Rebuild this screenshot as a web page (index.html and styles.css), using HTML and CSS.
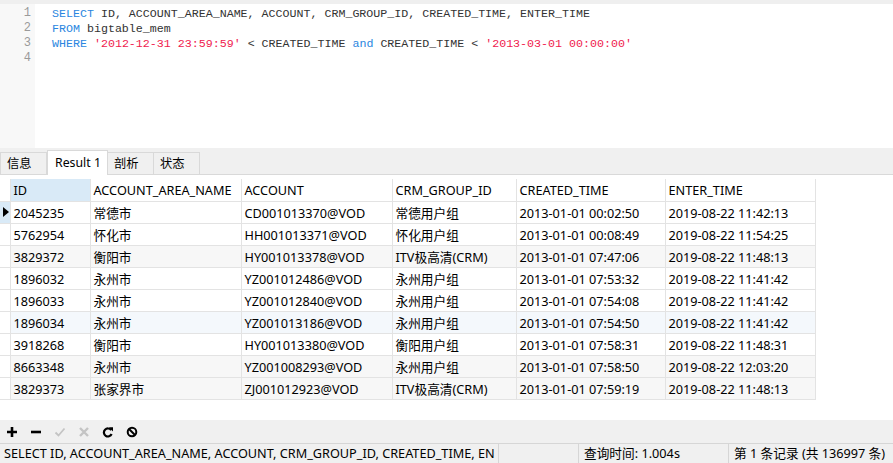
FILE: index.html
```html
<!DOCTYPE html>
<html>
<head>
<meta charset="utf-8">
<link rel="stylesheet" href="styles.css">
</head>
<body>
<div class="app">
  <div class="topstrip"></div>
  <div class="editor">
    <div class="gutter">
      <div class="ln">1</div><div class="ln">2</div><div class="ln">3</div><div class="ln">4</div>
    </div>
    <div class="code">
      <div class="line"><span class="kw">SELECT</span> ID, ACCOUNT_AREA_NAME, ACCOUNT, CRM_GROUP_ID, CREATED_TIME, ENTER_TIME</div>
      <div class="line"><span class="kw">FROM</span> bigtable_mem</div>
      <div class="line"><span class="kw">WHERE</span> <span class="str">'2012-12-31 23:59:59'</span> &lt; CREATED_TIME <span class="kw">and</span> CREATED_TIME &lt; <span class="str">'2013-03-01 00:00:00'</span></div>
      <div class="line"></div>
    </div>
  </div>
  <div class="tabbar">
    <div class="tab">信息</div>
    <div class="tab active">Result 1</div>
    <div class="tab">剖析</div>
    <div class="tab">状态</div>
  </div>
  <div class="gridwrap">
    <table class="grid">
      <colgroup>
        <col class="c0"><col class="c1"><col class="c2"><col class="c3"><col class="c4"><col class="c5"><col class="c6">
      </colgroup>
      <thead>
        <tr><th class="ind"></th><th class="sel">ID</th><th>ACCOUNT_AREA_NAME</th><th>ACCOUNT</th><th>CRM_GROUP_ID</th><th>CREATED_TIME</th><th>ENTER_TIME</th></tr>
      </thead>
      <tbody>
        <tr class="cur"><td class="ind"><span class="tri"></span></td><td>2045235</td><td>常德市</td><td>CD001013370@VOD</td><td>常德用户组</td><td>2013-01-01 00:02:50</td><td>2019-08-22 11:42:13</td></tr>
        <tr><td class="ind"></td><td>5762954</td><td>怀化市</td><td>HH001013371@VOD</td><td>怀化用户组</td><td>2013-01-01 00:08:49</td><td>2019-08-22 11:54:25</td></tr>
        <tr class="alt"><td class="ind"></td><td>3829372</td><td>衡阳市</td><td>HY001013378@VOD</td><td>ITV极高清(CRM)</td><td>2013-01-01 07:47:06</td><td>2019-08-22 11:48:13</td></tr>
        <tr><td class="ind"></td><td>1896032</td><td>永州市</td><td>YZ001012486@VOD</td><td>永州用户组</td><td>2013-01-01 07:53:32</td><td>2019-08-22 11:41:42</td></tr>
        <tr><td class="ind"></td><td>1896033</td><td>永州市</td><td>YZ001012840@VOD</td><td>永州用户组</td><td>2013-01-01 07:54:08</td><td>2019-08-22 11:41:42</td></tr>
        <tr class="hov"><td class="ind"></td><td>1896034</td><td>永州市</td><td>YZ001013186@VOD</td><td>永州用户组</td><td>2013-01-01 07:54:50</td><td>2019-08-22 11:41:42</td></tr>
        <tr><td class="ind"></td><td>3918268</td><td>衡阳市</td><td>HY001013380@VOD</td><td>衡阳用户组</td><td>2013-01-01 07:58:31</td><td>2019-08-22 11:48:31</td></tr>
        <tr class="alt"><td class="ind"></td><td>8663348</td><td>永州市</td><td>YZ001008293@VOD</td><td>永州用户组</td><td>2013-01-01 07:58:50</td><td>2019-08-22 12:03:20</td></tr>
        <tr class="alt"><td class="ind"></td><td>3829373</td><td>张家界市</td><td>ZJ001012923@VOD</td><td>ITV极高清(CRM)</td><td>2013-01-01 07:59:19</td><td>2019-08-22 11:48:13</td></tr>
      </tbody>
    </table>
  </div>
  <div class="filler"></div>
  <div class="toolbar">
    <span class="tbtn"><svg width="12" height="12" viewBox="0 0 12 12"><path d="M6 1v10M1 6h10" stroke="#000" stroke-width="2.6"/></svg></span>
    <span class="tbtn"><svg width="12" height="12" viewBox="0 0 12 12"><path d="M1 6h10" stroke="#000" stroke-width="2.6"/></svg></span>
    <span class="tbtn"><svg width="12" height="12" viewBox="0 0 12 12"><path d="M1.5 6.5l3 3 6-7" stroke="#c4c4c4" stroke-width="1.8" fill="none"/></svg></span>
    <span class="tbtn"><svg width="12" height="12" viewBox="0 0 12 12"><path d="M2 2l8 8M10 2l-8 8" stroke="#c4c4c4" stroke-width="2.4"/></svg></span>
    <span class="tbtn"><svg width="12" height="12" viewBox="0 0 12 12"><path d="M9.2 4.2A4 4 0 1 0 9.6 8" stroke="#000" stroke-width="2.2" fill="none"/><path d="M6.8 1.2L11 1.2 11 5.4Z" fill="#000"/></svg></span>
    <span class="tbtn"><svg width="12" height="12" viewBox="0 0 12 12"><circle cx="6" cy="6" r="4.3" stroke="#000" stroke-width="2" fill="none"/><path d="M3 3l6 6" stroke="#000" stroke-width="2"/></svg></span>
  </div>
  <div class="status">
    <div class="seg s1">SELECT ID, ACCOUNT_AREA_NAME, ACCOUNT, CRM_GROUP_ID, CREATED_TIME, EN</div>
    <div class="seg s2"></div>
    <div class="seg s3">查询时间: 1.004s</div>
    <div class="seg s4">第 1 条记录 (共 136997 条)</div>
  </div>
</div>
</body>
</html>
```

FILE: styles.css
```css
* { box-sizing: border-box; }
html, body { margin: 0; padding: 0; }
body {
  width: 893px;
  height: 463px;
  overflow: hidden;
  background: #fff;
  font-family: "Noto Sans", "Noto Sans CJK SC", sans-serif;
  font-size: 12.7px;
  color: #000;
}
.app {
  display: flex;
  flex-direction: column;
  height: 463px;
}
.topstrip {
  height: 4px;
  background: #efefef;
  flex: none;
}
.editor {
  height: 144px;
  flex: none;
  display: flex;
  background: #fff;
}
.gutter {
  width: 35px;
  background: #f8f8f8;
  padding-top: 2px;
}
.ln {
  height: 15px;
  line-height: 15px;
  text-align: right;
  padding-right: 4px;
  color: #9a9a9a;
  font-family: "Liberation Mono", monospace;
  font-size: 12px;
}
.code {
  padding-left: 17px;
  padding-top: 2px;
  font-family: "Liberation Mono", monospace;
  font-size: 11.65px;
  color: #333;
}
.line {
  height: 15px;
  line-height: 15px;
  white-space: pre;
}
.kw { color: #2a86e0; }
.str { color: #f0204e; }
.tabbar {
  height: 27px;
  flex: none;
  background: #f0f0f0;
  display: flex;
  align-items: flex-end;
  border-bottom: 1px solid #d9d9d9;
  padding-top: 3px;
}
.tab {
  height: 22px;
  line-height: 22px;
  padding: 0 0 0 6px;
  border: 1px solid #d9d9d9;
  border-bottom: none;
  background: #f0f0f0;
  font-size: 12.3px;
}
.tab:nth-child(1) { width: 47px; }
.tab:nth-child(2) { width: 61px; }
.tab:nth-child(3) { width: 46px; border-left: none; }
.tab:nth-child(4) { width: 46px; border-left: none; }
.tab.active {
  height: 25px;
  line-height: 24px;
  background: #fff;
  padding-left: 7px;
  margin-bottom: -1px;
  position: relative;
}
.gridwrap {
  padding-top: 4px;
  flex: none;
}
.grid {
  border-collapse: collapse;
  table-layout: fixed;
  width: 815px;
}
.c0 { width: 10px; }
.c1 { width: 80px; }
.c2 { width: 151px; }
.c3 { width: 151px; }
.c4 { width: 124px; }
.c5 { width: 149px; }
.c6 { width: 150px; }
.grid th, .grid td {
  height: 22px;
  padding: 1px 0 0 3px;
  border: 1px solid #e3e3e3;
  text-align: left;
  font-weight: normal;
  white-space: nowrap;
  overflow: hidden;
  line-height: 20px;
  vertical-align: middle;
}
.grid thead th { border-top: none; }
.grid th.ind, .grid td.ind { border-left: none; padding: 0; }
.grid th.sel { background: #d9eaf7; }
.grid tr.cur td.ind { background: #d9eaf7; }
.grid tr.alt td { background: #f7f7f7; }
.grid tr.hov td { background: #f4f8fc; }
.grid tr.alt td.ind, .grid tr.hov td.ind { background: #fff; }
.tri {
  display: block;
  width: 0;
  height: 0;
  margin-left: 3px;
  border-top: 5px solid transparent;
  border-bottom: 5px solid transparent;
  border-left: 6px solid #000;
}
.filler { flex: 1; }
.toolbar {
  height: 23px;
  flex: none;
  background: #f0f0f0;
  display: flex;
  align-items: center;
  padding-left: 0;
}
.tbtn {
  width: 24px;
  display: flex;
  justify-content: center;
  align-items: center;
}
.tbtn svg { display: block; }
.status {
  height: 20px;
  flex: none;
  background: #f0f0f0;
  border-top: 1px solid #d6d6d6;
  display: flex;
  line-height: 19px;
}
.seg {
  white-space: nowrap;
  overflow: hidden;
  padding-left: 5px;
}
.s1 { width: 498px; padding-left: 4px; }
.s2 { width: 80px; border-left: 1px solid #d6d6d6; }
.s3 { width: 150px; border-left: 1px solid #d6d6d6; }
.s4 { flex: 1; border-left: 1px solid #d6d6d6; }
```
